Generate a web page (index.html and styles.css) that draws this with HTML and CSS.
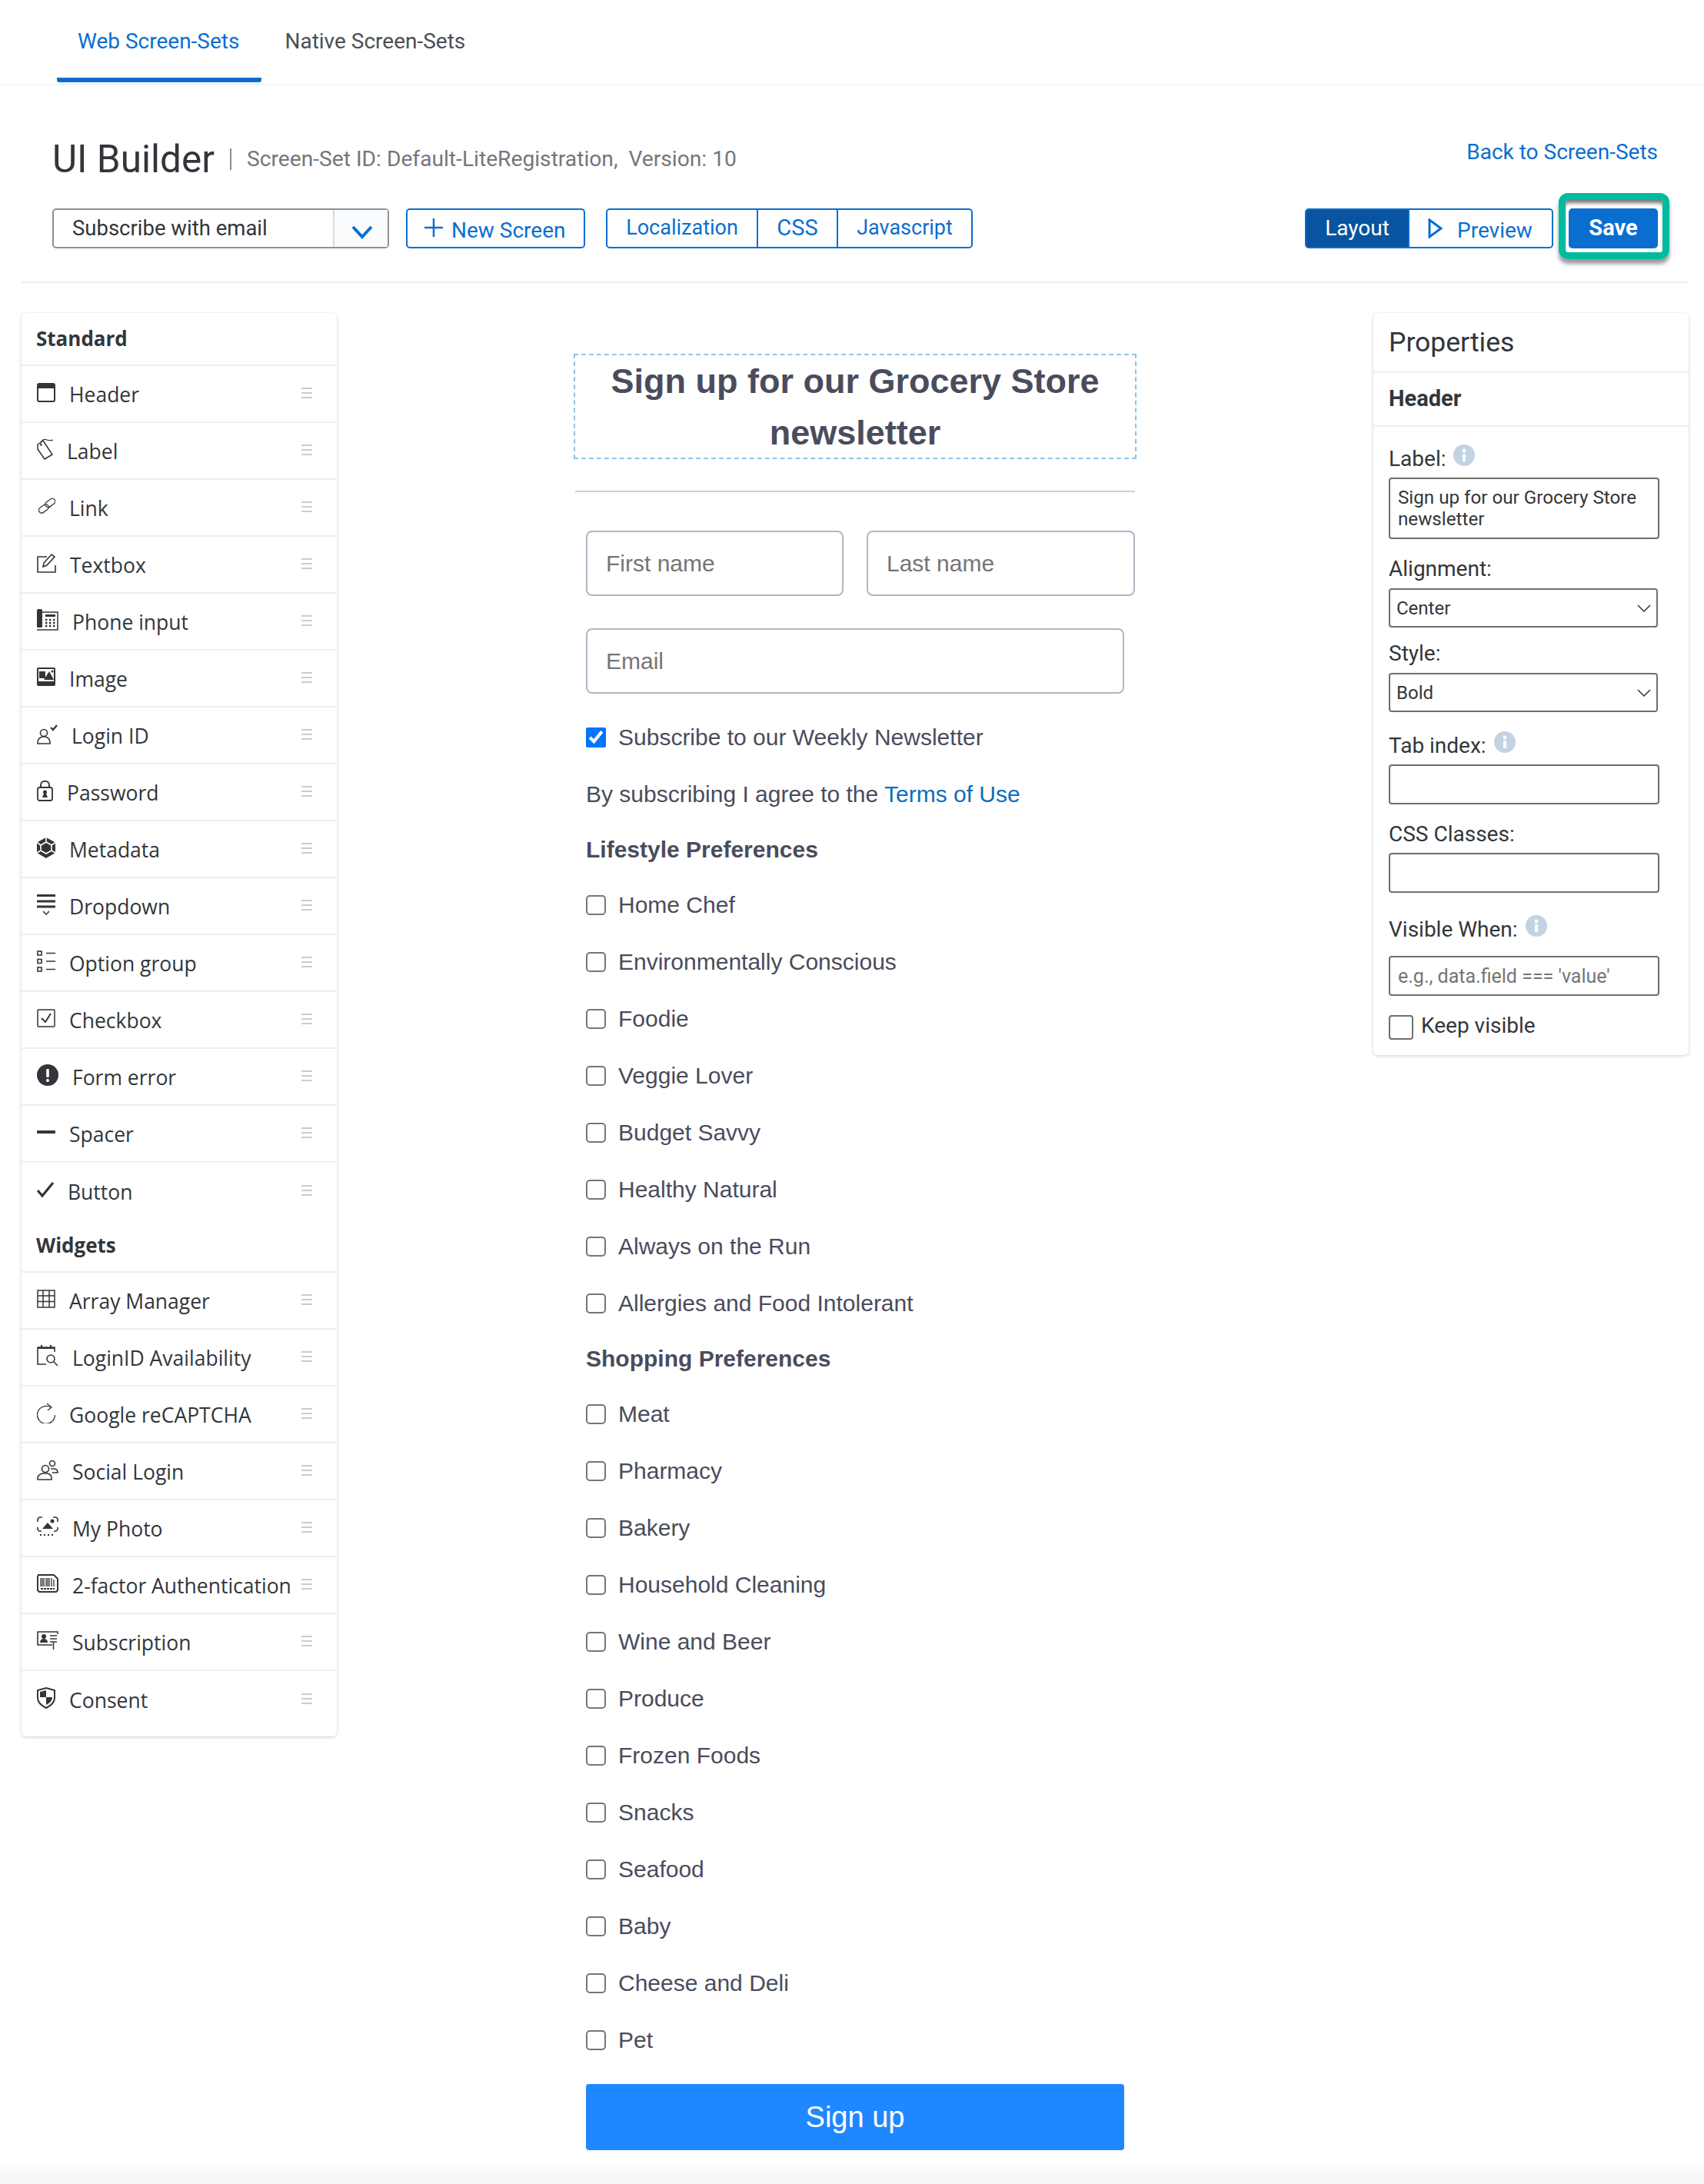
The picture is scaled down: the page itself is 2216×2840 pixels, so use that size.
FILE: index.html
```html
<!DOCTYPE html>
<html lang="en">
<head>
<meta charset="UTF-8" />
<title>UI Builder</title>
<link rel="stylesheet" href="styles.css">
</head>
<body>
<nav class="tabs">
  <a class="tab tab-active">Web Screen-Sets</a>
  <a class="tab">Native Screen-Sets</a>
</nav>

<header class="head">
  <div class="title-row">
    <h1>UI Builder</h1>
    <span class="title-sep"></span>
    <span class="title-info">Screen-Set ID: Default-LiteRegistration,&nbsp; Version: 10</span>
    <a class="back-link">Back to Screen-Sets</a>
  </div>
  <div class="toolbar">
    <div class="screen-select">
      <span class="screen-name">Subscribe with email</span>
      <span class="screen-arrow">
        <svg width="30" height="20" viewBox="0 0 30 20"><path d="M3 4l12 13L27 4" fill="none" stroke="#0a6ed1" stroke-width="4"/></svg>
      </span>
    </div>
    <button class="btn btn-new">
      <svg width="24" height="24" viewBox="0 0 24 24"><path d="M12 0v24M0 12h24" stroke="#0a6ed1" stroke-width="2.5"/></svg>
      New Screen
    </button>
    <div class="btn-group group-edit">
      <button class="btn-part part-local">Localization</button>
      <button class="btn-part part-css">CSS</button>
      <button class="btn-part part-js">Javascript</button>
    </div>
    <div class="btn-group group-mode">
      <button class="btn-part part-layout">Layout</button>
      <button class="btn-part part-preview">
        <svg width="20" height="26" viewBox="0 0 20 26"><path d="M2 2l15 11L2 24z" fill="none" stroke="#0a6ed1" stroke-width="3"/></svg>
        Preview
      </button>
    </div>
    <button class="btn-save">Save</button>
  </div>
</header>

<main class="content">
  <aside class="panel tools">
    <h3 class="tools-head">Standard</h3>
    <ul class="tool-list">
      <li class="tool"><svg width="24" height="25" viewBox="0 0 24 25"><rect x="1" y="1" width="22" height="23" rx="2" fill="none" stroke="#32363a" stroke-width="2"/><rect x="1" y="1" width="22" height="6" fill="#32363a"/></svg><span>Header</span><i class="grip"></i></li>
      <li class="tool"><svg width="21" height="28" viewBox="0 0 21 28"><path d="M1 8l7-5 12 18-10 6-9-13z" fill="none" stroke="#32363a" stroke-width="1.5" stroke-linejoin="round"/><circle cx="5.5" cy="8.500" r="1.300" fill="#32363a"/><path d="M5 8C4 3 9 0 13 2c3 1 5 1 8 0" fill="none" stroke="#32363a" stroke-width="1.200"/></svg><span>Label</span><i class="grip"></i></li>
      <li class="tool"><svg width="24" height="25" viewBox="0 0 24 25"><g fill="none" stroke="#32363a" stroke-width="1.300"><rect x="0" y="0" width="14" height="7.500" rx="3.750" transform="translate(1 16.500) rotate(-36)"/><rect x="0" y="0" width="14" height="7.500" rx="3.750" transform="translate(9.500 9) rotate(-36)"/></g></svg><span>Link</span><i class="grip"></i></li>
      <li class="tool"><svg width="25" height="26" viewBox="0 0 25 26"><g fill="none" stroke="#32363a" stroke-width="1.6"><path d="M13 5H1v20h23v-9"/><path d="M8 18l1-5L19 2l4 3-10 11z"/></g></svg><span>Textbox</span><i class="grip"></i></li>
      <li class="tool"><svg width="28" height="28" viewBox="0 0 28 28"><rect x="0" y="0" width="7" height="24" rx="1.5" fill="#32363a"/><path d="M7 4h20v23H0" fill="none" stroke="#32363a" stroke-width="1.5"/><rect x="11" y="7" width="13" height="3" fill="#32363a"/><path d="M11 14h13M11 18h13M11 22h13" stroke="#32363a" stroke-width="2.4" stroke-dasharray="2.4 2.6"/></svg><span>Phone input</span><i class="grip"></i></li>
      <li class="tool"><svg width="24" height="24" viewBox="0 0 24 24"><rect x="0" y="0" width="24" height="24" rx="2" fill="#32363a"/><rect x="2" y="2" width="20" height="16" fill="#fff"/><rect x="3" y="5" width="8" height="9" fill="#32363a"/><path d="M9 16l7-11 6 11z" fill="#32363a"/><circle cx="20" cy="5" r="1.5" fill="#32363a"/></svg><span>Image</span><i class="grip"></i></li>
      <li class="tool"><svg width="27" height="28" viewBox="0 0 27 28"><g fill="none" stroke="#32363a" stroke-width="1.6"><circle cx="9" cy="13" r="4.5"/><path d="M1 27v-2c0-4 3-6 6-7h4c3 1 6 3 6 7v2z"/></g><path d="M18 6l3 3 5-6" fill="none" stroke="#32363a" stroke-width="2.2"/></svg><span>Login ID</span><i class="grip"></i></li>
      <li class="tool"><svg width="21" height="28" viewBox="0 0 21 28"><rect x="1" y="10" width="19" height="17" rx="2.5" fill="none" stroke="#32363a" stroke-width="1.8"/><path d="M5 10V7c0-7 11-7 11 0v3" fill="none" stroke="#32363a" stroke-width="2"/><circle cx="10.5" cy="16" r="2.5" fill="#32363a"/><path d="M7 23l2-5h3l2 5z" fill="#32363a"/></svg><span>Password</span><i class="grip"></i></li>
      <li class="tool"><svg width="24" height="27" viewBox="0 0 24 27"><path d="M12 0l12 6.500V20l-12 7-12-7V6.500z" fill="#32363a"/><path d="M12 6l7 4v7l-7 4-7-4v-7zM12 0v6M24 6.500L19 10M0 6.500L5 10M24 20l-5-3M0 20l5-3" fill="none" stroke="#fff" stroke-width="1.600"/></svg><span>Metadata</span><i class="grip"></i></li>
      <li class="tool"><svg width="24" height="27" viewBox="0 0 24 27"><path d="M0 1.5h24M0 9h24M0 16h24" stroke="#32363a" stroke-width="3"/><path d="M8 22l4 4 4-4" fill="none" stroke="#32363a" stroke-width="1.5"/></svg><span>Dropdown</span><i class="grip"></i></li>
      <li class="tool"><svg width="24" height="28" viewBox="0 0 24 28"><g fill="none" stroke="#32363a" stroke-width="1.6"><rect x="1" y="1" width="5" height="5"/><rect x="1" y="11.5" width="5" height="5"/><rect x="1" y="22" width="5" height="5"/><path d="M12 3.5h12M12 14h12M12 24.5h12"/></g></svg><span>Option group</span><i class="grip"></i></li>
      <li class="tool"><svg width="24" height="24" viewBox="0 0 24 24"><rect x="1" y="1" width="22" height="22" rx="1" fill="none" stroke="#32363a" stroke-width="1.5"/><path d="M6 12l5 5 7-11" fill="none" stroke="#32363a" stroke-width="2"/></svg><span>Checkbox</span><i class="grip"></i></li>
      <li class="tool"><svg width="28" height="28" viewBox="0 0 28 28"><circle cx="14" cy="14" r="14" fill="#32363a"/><rect x="12.2" y="6" width="3.6" height="11" rx="1.4" fill="#fff"/><circle cx="14" cy="21" r="2" fill="#fff"/></svg><span>Form error</span><i class="grip"></i></li>
      <li class="tool"><svg width="24" height="4" viewBox="0 0 24 4"><rect width="24" height="4" rx="1" fill="#32363a"/></svg><span>Spacer</span><i class="grip"></i></li>
      <li class="tool"><svg width="22" height="22" viewBox="0 0 22 22"><path d="M1 12l6 7L21 2" fill="none" stroke="#32363a" stroke-width="3.2"/></svg><span>Button</span><i class="grip"></i></li>
    </ul>
    <h3 class="tools-head">Widgets</h3>
    <ul class="tool-list">
      <li class="tool"><svg width="24" height="24" viewBox="0 0 24 24"><path d="M1 1h22v22H1zM1 8h22M1 15.500h22M8 1v22M16 1v22" fill="none" stroke="#32363a" stroke-width="1.5"/></svg><span>Array Manager</span><i class="grip"></i></li>
      <li class="tool"><svg width="28" height="28" viewBox="0 0 28 28"><g fill="none" stroke="#32363a" stroke-width="1.6"><path d="M12 25H1V3h22v6"/><circle cx="18" cy="18" r="5"/><path d="M22 22l5 5"/></g><path d="M1 3h22v2H1zM5 0h2v4H5zM17 0h2v4h-2z" fill="#32363a"/></svg><span>LoginID Availability</span><i class="grip"></i></li>
      <li class="tool"><svg width="24" height="27" viewBox="0 0 24 27"><g fill="none" stroke="#32363a" stroke-width="1.300"><path d="M23.500 16a11.500 11.500 0 1 1-8-11L19 6"/><path d="M13 1l6 5-5 4"/></g></svg><span>Google reCAPTCHA</span><i class="grip"></i></li>
      <li class="tool"><svg width="28" height="27" viewBox="0 0 28 27"><g fill="none" stroke="#32363a" stroke-width="1.6"><circle cx="11" cy="12" r="4.500"/><path d="M1 26v-2c0-3 3-5 6-6h7c3 1 5 3 5 6v2z"/><circle cx="20" cy="5" r="3.500"/><path d="M18 12h4c3 0 5 2 5 5h-7"/></g></svg><span>Social Login</span><i class="grip"></i></li>
      <li class="tool"><svg width="28" height="26" viewBox="0 0 28 26"><g fill="none" stroke="#32363a" stroke-width="1.6"><path d="M1 7V3l2-2h4M21 1h4l2 2v4M1 14v3l2 2h3M27 14v3l-2 2h-3"/></g><path d="M7 16l7-8 7 8z" fill="#32363a"/><circle cx="20" cy="6" r="2.500" fill="#32363a"/><path d="M4 24h20" stroke="#32363a" stroke-width="2" stroke-dasharray="2 3"/></svg><span>My Photo</span><i class="grip"></i></li>
      <li class="tool"><svg width="28" height="24" viewBox="0 0 28 24"><path d="M2 1h20l5 5v15l-2 2H3l-2-2V3z" fill="none" stroke="#32363a" stroke-width="2"/><path d="M5 5v11M7 5v11M9 5v11M12 5v11M14 5v11M16 5v11M19 5v11M22 7v9" stroke="#32363a" stroke-width="1.3"/><path d="M5 19h18" stroke="#32363a" stroke-width="2" stroke-dasharray="3 1"/></svg><span>2-factor Authentication</span><i class="grip"></i></li>
      <li class="tool"><svg width="28" height="24" viewBox="0 0 28 24"><path d="M20 18H1V1h26v3" fill="none" stroke="#32363a" stroke-width="1.6"/><circle cx="9" cy="7" r="3" fill="#32363a"/><path d="M4 15c0-4 3-5 5-5s5 1 5 5z" fill="#32363a"/><path d="M17 6h9M17 10h9M17 14h9M21.500 14v10" stroke="#32363a" stroke-width="1.500"/></svg><span>Subscription</span><i class="grip"></i></li>
      <li class="tool"><svg width="24" height="28" viewBox="0 0 24 28"><path d="M12 1l11 3v10c0 6-5 10-11 13C6 24 1 20 1 14V4z" fill="none" stroke="#32363a" stroke-width="2"/><path d="M4 6l8-2v9H4zM12 13h8c0 5-4 8-8 10z" fill="#32363a"/></svg><span>Consent</span><i class="grip"></i></li>
    </ul>
  </aside>

  <form class="sheet">
    <h2 class="sheet-title">Sign up for our Grocery Store newsletter</h2>
    <hr class="sheet-rule">
    <div class="name-row">
      <input class="field field-first" placeholder="First name">
      <input class="field field-last" placeholder="Last name">
    </div>
    <input class="field field-email" placeholder="Email">
    <label class="check check-first"><input type="checkbox" checked><span>Subscribe to our Weekly Newsletter</span></label>
    <p class="terms">By subscribing I agree to the <a class="terms-link">Terms of Use</a></p>
    <h4 class="group-title">Lifestyle Preferences</h4>
    <label class="check"><input type="checkbox"><span>Home Chef</span></label>
    <label class="check"><input type="checkbox"><span>Environmentally Conscious</span></label>
    <label class="check"><input type="checkbox"><span>Foodie</span></label>
    <label class="check"><input type="checkbox"><span>Veggie Lover</span></label>
    <label class="check"><input type="checkbox"><span>Budget Savvy</span></label>
    <label class="check"><input type="checkbox"><span>Healthy Natural</span></label>
    <label class="check"><input type="checkbox"><span>Always on the Run</span></label>
    <label class="check"><input type="checkbox"><span>Allergies and Food Intolerant</span></label>
    <h4 class="group-title">Shopping Preferences</h4>
    <label class="check"><input type="checkbox"><span>Meat</span></label>
    <label class="check"><input type="checkbox"><span>Pharmacy</span></label>
    <label class="check"><input type="checkbox"><span>Bakery</span></label>
    <label class="check"><input type="checkbox"><span>Household Cleaning</span></label>
    <label class="check"><input type="checkbox"><span>Wine and Beer</span></label>
    <label class="check"><input type="checkbox"><span>Produce</span></label>
    <label class="check"><input type="checkbox"><span>Frozen Foods</span></label>
    <label class="check"><input type="checkbox"><span>Snacks</span></label>
    <label class="check"><input type="checkbox"><span>Seafood</span></label>
    <label class="check"><input type="checkbox"><span>Baby</span></label>
    <label class="check"><input type="checkbox"><span>Cheese and Deli</span></label>
    <label class="check"><input type="checkbox"><span>Pet</span></label>
    <button type="button" class="submit">Sign up</button>
  </form>

  <aside class="panel props">
    <h3 class="props-title">Properties</h3>
    <h4 class="props-sub">Header</h4>
    <div class="props-body">
      <label class="prop-label label-first">Label:<svg class="info" width="28" height="28" viewBox="0 0 28 28"><circle cx="14" cy="14" r="14" fill="#c3d3e2"/><circle cx="14" cy="8" r="2.400" fill="#fff"/><rect x="12" y="12" width="4" height="10" fill="#fff"/></svg></label>
      <div class="prop-area">Sign up for our Grocery Store newsletter</div>
      <label class="prop-label label-align">Alignment:</label>
      <div class="prop-select">Center<svg width="18" height="10" viewBox="0 0 18 10"><path d="M1 1l8 8 8-8" fill="none" stroke="#32363a" stroke-width="1.500"/></svg></div>
      <label class="prop-label label-style">Style:</label>
      <div class="prop-select">Bold<svg width="18" height="10" viewBox="0 0 18 10"><path d="M1 1l8 8 8-8" fill="none" stroke="#32363a" stroke-width="1.500"/></svg></div>
      <label class="prop-label label-tab">Tab index:<svg class="info" width="28" height="28" viewBox="0 0 28 28"><circle cx="14" cy="14" r="14" fill="#c3d3e2"/><circle cx="14" cy="8" r="2.400" fill="#fff"/><rect x="12" y="12" width="4" height="10" fill="#fff"/></svg></label>
      <input class="prop-input">
      <label class="prop-label label-css">CSS Classes:</label>
      <input class="prop-input">
      <label class="prop-label label-visible">Visible When:<svg class="info" width="28" height="28" viewBox="0 0 28 28"><circle cx="14" cy="14" r="14" fill="#c3d3e2"/><circle cx="14" cy="8" r="2.400" fill="#fff"/><rect x="12" y="12" width="4" height="10" fill="#fff"/></svg></label>
      <input class="prop-input prop-when" placeholder="e.g., data.field === 'value'">
      <div class="keep"><span class="keep-box"></span><span class="keep-text">Keep visible</span></div>
    </div>
  </aside>
</main>
</body>
</html>
```
FILE: styles.css
```css
* {
  box-sizing: border-box;
}
html, body {
  margin: 0;
  padding: 0;
}
body {
  width: 2216px;
  height: 2840px;
  font-family: Roboto, Arial, sans-serif;
  color: #32363a;
  background: linear-gradient(#fff 2810px, #f8f8f8 2830px);
  overflow: hidden;
}
h1, h2, h3, h4, p, ul {
  margin: 0;
  padding: 0;
}
button {
  font-family: inherit;
  cursor: pointer;
}

/* Top tabs */
.tabs {
  display: flex;
  height: 111px;
  padding-left: 74px;
  border-bottom: 2px solid #f2f5fb;
}
.tab {
  height: 107px;
  padding: 35px 29px 0 27px;
  font-size: 28px;
  line-height: 38px;
  color: #4b4f55;
}
.tab + .tab {
  padding-left: 30px;
}
.tab-active {
  color: #0a6ed1;
  border-bottom: 6px solid #0a6ed1;
  border-radius: 3px;
}

/* Title and toolbar */
.head {
  margin: 0 20px 0 28px;
  padding: 66px 40px 43px 40px;
  border-bottom: 2px solid #eee;
}
.title-row {
  display: flex;
  align-items: center;
  height: 60px;
}
.title-row h1 {
  font-size: 49.500px;
  font-weight: 400;
  line-height: 60px;
}
.title-sep {
  width: 2px;
  height: 28px;
  margin: 0 20px 0 20px;
  background: #8a8d90;
}
.title-info {
  margin-top: -2px;
  font-size: 28.200px;
  color: #74777a;
}
.back-link {
  margin: -20px 0 0 auto;
  font-size: 28px;
  color: #0a6ed1;
}
.toolbar {
  display: flex;
  height: 52px;
  margin-top: 34px;
}
.screen-select {
  display: flex;
  width: 438px;
  height: 52px;
  border: 2px solid #89919a;
  border-radius: 5px;
}
.screen-name {
  width: 365px;
  padding-left: 24px;
  font-size: 27.500px;
  line-height: 48px;
  border-right: 2px solid #d5dadd;
}
.screen-arrow {
  display: flex;
  flex: 1;
  align-items: center;
  justify-content: center;
  padding: 8px 0 0 2px;
  background: #fafbfc;
}
.btn, .btn-part {
  height: 52px;
  font-size: 28px;
  color: #0a6ed1;
  background: #fff;
  border: 2px solid #0a6ed1;
  padding: 0 0 2px;
}
.btn {
  display: flex;
  align-items: center;
  width: 233px;
  margin-left: 22px;
  padding: 4px 0 0 22px;
  border-radius: 5px;
}
.btn svg {
  margin: -6px 11px 0 0;
}
.btn-group {
  display: flex;
}
.group-edit {
  margin-left: 27px;
}
.group-mode {
  margin-left: auto;
}
.btn-part {
  margin-left: -2px;
}
.btn-part:first-child {
  margin-left: 0;
  border-radius: 5px 0 0 5px;
}
.btn-part:last-child {
  border-radius: 0 5px 5px 0;
}
.part-local { width: 198px; font-size: 27px; }
.part-css { width: 106px; font-size: 29px; }
.part-js { width: 177px; font-size: 27px; }
.part-layout {
  width: 136px;
  color: #fff;
  background: #0854a0;
}
.part-preview {
  display: flex;
  align-items: center;
  width: 189px;
  padding: 4px 0 0 24px;
}
.part-preview svg {
  margin: -4px 18px 0 0;
}
.btn-save {
  position: relative;
  width: 116px;
  height: 52px;
  margin-left: 20px;
  padding: 0 0 2px;
  font-size: 29px;
  font-weight: 700;
  color: #fff;
  background: #0a6ed1;
  border: 0;
  border-radius: 5px;
}
/* highlight frame drawn over the screenshot */
.btn-save::after {
  content: "";
  position: absolute;
  top: -20px;
  right: -15px;
  bottom: -14px;
  left: -13px;
  border: 9px solid #00bb9f;
  border-radius: 12px;
  box-shadow: inset 0 6px 5px -2px rgba(0, 0, 0, .55), 0 6px 5px rgba(0, 0, 0, .4);
}

/* Three columns */
.content {
  display: flex;
  align-items: flex-start;
  margin: 39px 20px 0 28px;
  justify-content: space-between;
}
.panel {
  width: 410px;
  background: #fff;
  border-radius: 6px;
  box-shadow: 0 1px 4px rgba(0, 0, 0, .2);
}

/* Left tool list */
.tools {
  padding-bottom: 11px;
}
.tools-head {
  height: 69px;
  padding: 0 19px;
  font-family: "Open Sans", sans-serif;
  font-size: 26px;
  font-weight: 700;
  line-height: 66px;
  border-bottom: 2px solid #eee;
}
.tool-list {
  list-style: none;
}
.tool {
  display: flex;
  align-items: center;
  height: 74px;
  padding: 2px 32px 0 20px;
  font-family: "Open Sans", sans-serif;
  font-size: 26.500px;
  border-bottom: 2px solid #eee;
}
.tool svg {
  flex-shrink: 0;
  margin: -6px 18px 0 0;
}
.tool:last-child {
  border-bottom: 0;
}
.tool span {
  flex: 1;
  white-space: nowrap;
}
.grip {
  width: 14px;
  height: 14px;
  margin-top: -4px;
  border-top: 2px solid #ccc;
  border-bottom: 2px solid #ccc;
  background: linear-gradient(#ccc, #ccc) center / 14px 2px no-repeat;
}

/* Center form */
.sheet {
  width: 732px;
  margin-top: 53px;
  font-family: "Liberation Sans", Arial, sans-serif;
  font-size: 30px;
  color: #4a4c5c;
}
.sheet-title {
  height: 137px;
  font-size: 45px;
  line-height: 67px;
  text-align: center;
  border: 2px dashed #8cc4e8;
}
.sheet-rule {
  height: 2px;
  margin: 41px 2px 50px;
  border: 0;
  background: #cfcfcf;
}
.name-row {
  display: flex;
  gap: 30px;
  margin-left: 16px;
}
.field {
  height: 85px;
  padding: 0 24px;
  font-family: inherit;
  font-size: 30px;
  border: 2px solid #b0b6c4;
  border-radius: 8px;
  outline: none;
}
.field::placeholder {
  color: #757575;
}
.field-first { width: 335px; }
.field-last { width: 349px; }
.field-email {
  display: block;
  width: 700px;
  margin: 42px 0 20px 16px;
}
.check {
  display: flex;
  align-items: center;
  height: 74px;
  margin-left: 16px;
}
.check input {
  width: 26px;
  height: 26px;
  margin: 0 16px 0 0;
  flex-shrink: 0;
}
.check input:not(:checked) {
  appearance: none;
  background: #fff;
  border: 2px solid #767676;
  border-radius: 5px;
}
.terms {
  height: 74px;
  margin-left: 16px;
  line-height: 74px;
}
.terms-link {
  color: #0a6ebd;
}
.group-title {
  height: 70px;
  margin-left: 16px;
  line-height: 70px;
  font-size: 30px;
}
.submit {
  display: block;
  width: 700px;
  height: 86px;
  margin: 20px 0 0 16px;
  font-family: inherit;
  font-size: 38px;
  color: #fff;
  background: #1f87ff;
  border: 0;
  border-radius: 4px;
}

/* Right properties */
.props-title {
  height: 78px;
  padding: 0 20px;
  font-size: 35.500px;
  font-weight: 400;
  line-height: 76px;
  border-bottom: 2px solid #eee;
}
.props-sub {
  height: 70px;
  padding: 0 20px;
  font-size: 29px;
  font-weight: 700;
  line-height: 66px;
  border-bottom: 2px solid #eee;
}
.props-body {
  padding: 0 20px 20px;
}
.prop-label {
  display: flex;
  align-items: center;
  height: 40px;
  font-size: 28px;
  margin-bottom: 5px;
}
.info {
  margin: -8px 0 0 10px;
}
.label-first { margin-top: 21px; }
.label-align { margin: 18px 0 6px; }
.label-style { margin: 13px 0 6px; }
.label-tab { margin-top: 23px; }
.label-css { margin-top: 18px; }
.label-visible { margin: 27px 0 15px; }
.prop-area {
  width: 352px;
  height: 80px;
  padding: 10px 10px;
  font-size: 24.200px;
  line-height: 28px;
  border: 2px solid #6f6f6f;
  border-radius: 4px;
}
.prop-select {
  display: flex;
  align-items: center;
  justify-content: space-between;
  width: 350px;
  height: 51px;
  padding: 0 7px 0 8px;
  font-size: 24px;
  border: 2px solid #6f6f6f;
  border-radius: 4px;
}
.prop-input {
  display: block;
  width: 352px;
  height: 52px;
  padding: 0 10px;
  font-family: inherit;
  font-size: 25px;
  border: 2px solid #6f6f6f;
  border-radius: 4px;
  outline: none;
}
.prop-when::placeholder {
  color: #757575;
}
.keep {
  display: flex;
  align-items: center;
  margin-top: 25px;
  height: 32px;
  font-size: 28px;
}
.keep-box {
  width: 32px;
  height: 32px;
  margin-right: 10px;
  border: 2px solid #6f6f6f;
  border-radius: 4px;
}
.keep-text {
  margin-top: -6px;
}
```
